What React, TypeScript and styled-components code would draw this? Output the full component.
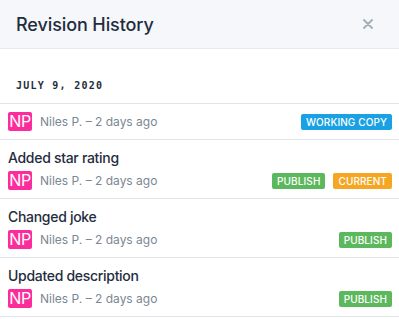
import styled, { createGlobalStyle } from 'styled-components'

const GlobalStyle = createGlobalStyle`
  html, body {
    margin: 0;
    padding: 0;
    background: #ffffff;
  }
  body {
    font-family: Inter, "Noto Sans", sans-serif;
    -webkit-font-smoothing: antialiased;
  }
`

const Panel = styled.div`
  width: 399px;
  height: 319px;
  overflow: hidden;
  background: #ffffff;
  display: flex;
  flex-direction: column;
`

const Header = styled.div`
  height: 48px;
  flex-shrink: 0;
  display: flex;
  align-items: center;
  justify-content: space-between;
  padding: 0 16px;
  background: #f5f7fa;
  border-bottom: 1px solid #e6eaef;
`

const Title = styled.h1`
  margin: 0;
  font-size: 18px;
  font-weight: 500;
  color: #1f2d3d;
  letter-spacing: -0.1px;
`

const CloseButton = styled.button`
  width: 20px;
  height: 20px;
  padding: 0;
  margin-right: 5px;
  border: 0;
  background: none;
  display: flex;
  align-items: center;
  justify-content: center;
  color: #a3adb8;
  cursor: pointer;
`

const DateLabel = styled.div`
  height: 55px;
  flex-shrink: 0;
  box-sizing: border-box;
  display: flex;
  align-items: flex-end;
  padding: 0 16px 12px;
  font-family: "DejaVu Sans Mono", "Liberation Mono", monospace;
  font-size: 10px;
  font-weight: 700;
  letter-spacing: 1.25px;
  color: #1f2d3d;
  border-bottom: 1px solid #e1e5ea;
`

const Row = styled.div`
  padding: 8px 7px 8px 8px;
  border-bottom: 1px solid #e1e5ea;
  display: flex;
  flex-direction: column;
  gap: 3px;
`

const RowTitle = styled.div`
  font-size: 14px;
  line-height: 20px;
  font-weight: 500;
  letter-spacing: -0.3px;
  color: #1f2d3d;
`

const Meta = styled.div`
  height: 19px;
  display: flex;
  align-items: center;
  gap: 8px;
`

const Avatar = styled.span`
  width: 24px;
  height: 19px;
  flex-shrink: 0;
  border-radius: 2px;
  background: #fc2c9c;
  color: #ffffff;
  font-size: 16px;
  line-height: 19px;
  text-align: center;
  letter-spacing: -0.3px;
`

const Author = styled.span`
  flex: 1;
  font-size: 12px;
  color: #7b8794;
`

const Badges = styled.div`
  display: flex;
  gap: 8px;
`

const badgeColors = {
  working: '#1aa1e4',
  publish: '#5cb85c',
  current: '#f5a623',
}

const Badge = styled.span<{ $kind: keyof typeof badgeColors }>`
  height: 16px;
  padding: 0 5px;
  border-radius: 2px;
  background: ${({ $kind }) => badgeColors[$kind]};
  color: #ffffff;
  font-size: 10px;
  font-weight: 500;
  line-height: 16px;
  letter-spacing: 0.1px;
`

type Kind = keyof typeof badgeColors

interface Revision {
  title?: string
  badges: { kind: Kind; label: string }[]
}

const revisions: Revision[] = [
  { badges: [{ kind: 'working', label: 'WORKING COPY' }] },
  {
    title: 'Added star rating',
    badges: [
      { kind: 'publish', label: 'PUBLISH' },
      { kind: 'current', label: 'CURRENT' },
    ],
  },
  { title: 'Changed joke', badges: [{ kind: 'publish', label: 'PUBLISH' }] },
  { title: 'Updated description', badges: [{ kind: 'publish', label: 'PUBLISH' }] },
]

export default function App() {
  return (
    <>
      <GlobalStyle />
      <Panel>
        <Header>
          <Title>Revision History</Title>
          <CloseButton aria-label="Close">
            <svg width="10" height="10" viewBox="0 0 10 10">
              <path d="M1 1L9 9M9 1L1 9" stroke="currentColor" strokeWidth="1.8" strokeLinecap="round" />
            </svg>
          </CloseButton>
        </Header>
        <DateLabel>JULY 9, 2020</DateLabel>
        {revisions.map((rev, i) => (
          <Row key={i}>
            {rev.title && <RowTitle>{rev.title}</RowTitle>}
            <Meta>
              <Avatar>NP</Avatar>
              <Author>Niles P. – 2 days ago</Author>
              <Badges>
                {rev.badges.map((b) => (
                  <Badge key={b.label} $kind={b.kind}>
                    {b.label}
                  </Badge>
                ))}
              </Badges>
            </Meta>
          </Row>
        ))}
      </Panel>
    </>
  )
}
